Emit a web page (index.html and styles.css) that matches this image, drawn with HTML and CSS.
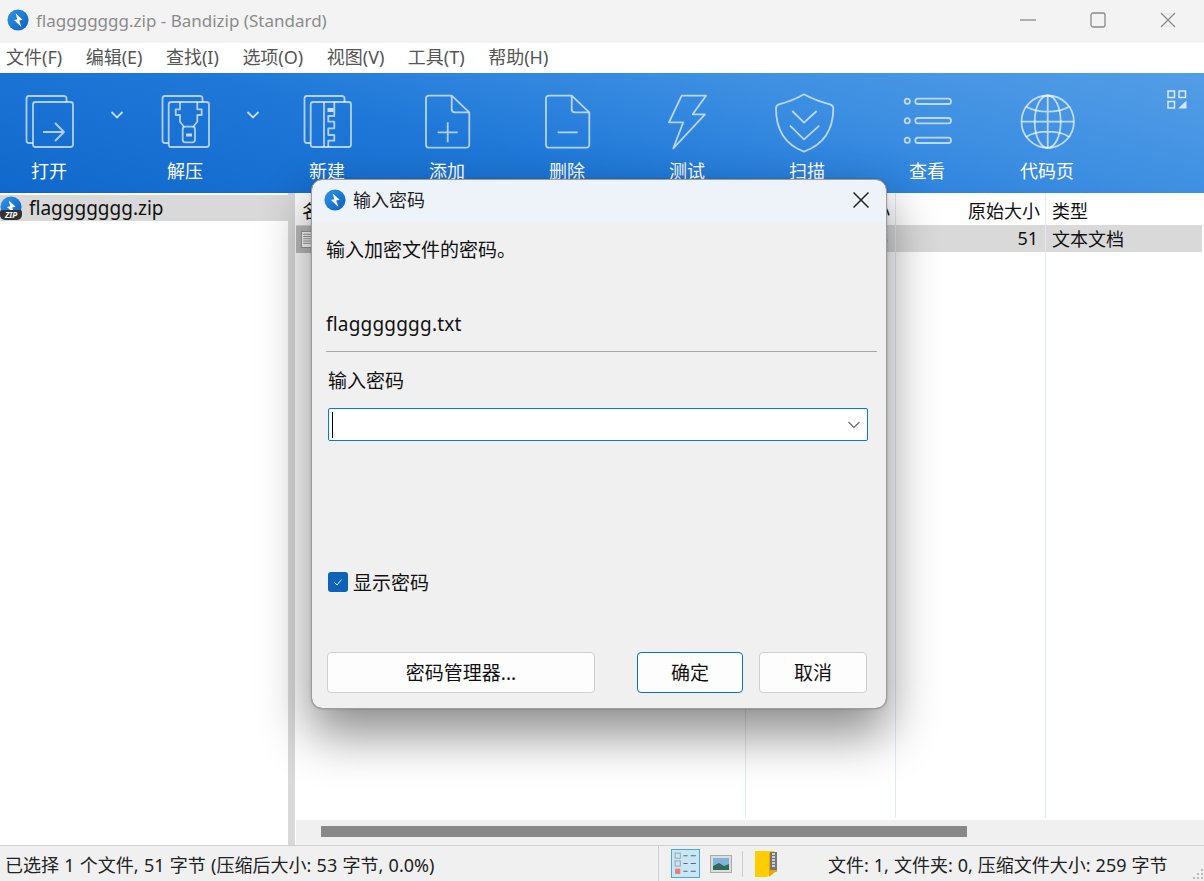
FILE: index.html
```html
<!DOCTYPE html>
<html lang="zh-CN">
<head>
<meta charset="utf-8">
<title>flaggggggg.zip - Bandizip (Standard)</title>
<link rel="stylesheet" href="styles.css">
</head>
<body>
<svg class="defs" width="0" height="0">
  <defs>
    <linearGradient id="logoBlue" x1="0" y1="0" x2="1" y2="1">
      <stop offset="0" stop-color="#2f96e6"/><stop offset="1" stop-color="#0b5fc0"/>
    </linearGradient>
    <symbol id="logo" viewBox="0 0 24 24">
      <circle cx="12" cy="12" r="11.5" fill="url(#logoBlue)"/>
      <path d="M9.500 4.800 17 11.800l-3.700.7 2.400 7L7.600 12l3.600-.9z" fill="#fff"/>
    </symbol>
  </defs>
</svg>
<div class="window">
  <header class="titlebar">
    <svg class="title-logo"><use href="#logo"/></svg>
    <span class="title-text">flaggggggg.zip - Bandizip (Standard)</span>
    <div class="controls">
      <svg class="ctl" viewBox="0 0 16 16"><path d="M0 8h16"/></svg>
      <svg class="ctl" viewBox="0 0 16 16"><rect x="1" y="1" width="14" height="14" rx="2"/></svg>
      <svg class="ctl" viewBox="0 0 16 16"><path d="M1 1l14 14M15 1 1 15"/></svg>
    </div>
  </header>
  <nav class="menubar">
    <span>文件(F)</span><span>编辑(E)</span><span>查找(I)</span><span>选项(O)</span><span>视图(V)</span><span>工具(T)</span><span>帮助(H)</span>
  </nav>
  <div class="toolbar">
    <div class="tool tool-first">
      <svg class="ticon" viewBox="0 0 64 64"><path d="M16 53h-4a2.500 2.500 0 0 1-2.500-2.500V8.500A2.500 2.500 0 0 1 12 6h35a2.500 2.500 0 0 1 2.500 2.500V12"/><rect x="16" y="12" width="40" height="45" rx="2.500"/><path d="M26 42h20M38 33l9 9-9 9"/></svg>
      <span>打开</span>
    </div>
    <div class="chev"><svg viewBox="0 0 14 10"><path d="M1.500 2 7 7.500 12.500 2"/></svg></div>
    <div class="tool tool-first">
      <svg class="ticon" viewBox="0 0 64 64"><path d="M15.700 53H12a2.500 2.500 0 0 1-2.500-2.500V8.500A2.500 2.500 0 0 1 12 6h35a2.500 2.500 0 0 1 2.500 2.500V12"/><rect x="15.700" y="12" width="40.300" height="45" rx="2.500"/><path d="M27 12v7.300h-4.300V25H27v6.700l4 5M44.300 12v7.300h4.400V25h-4.400v6.700l-4 5"/><rect x="29.700" y="36.700" width="12.300" height="15.600" rx="2.500"/><rect class="solid" x="33" y="43.500" width="6" height="3"/></svg>
      <span>解压</span>
    </div>
    <div class="chev"><svg viewBox="0 0 14 10"><path d="M1.500 2 7 7.500 12.500 2"/></svg></div>
    <div class="tools-rest">
      <div class="tool">
        <svg class="ticon" viewBox="0 0 64 64"><path d="M15.700 53H12a2.500 2.500 0 0 1-2.500-2.500V8.500A2.500 2.500 0 0 1 12 6h35a2.500 2.500 0 0 1 2.500 2.500V12"/><rect x="15.700" y="12" width="40.300" height="45" rx="2.500"/><path d="M29 12v45M39.300 12v14h-6v5.700h6v6.600h-6V45h6v5.700h-6V57"/><rect class="solid" x="32.500" y="18" width="6" height="4"/></svg>
        <span>新建</span>
      </div>
      <div class="tool">
        <svg class="ticon" viewBox="0 0 64 64"><path d="M36.700 5.700H14a3 3 0 0 0-3 3v46a3 3 0 0 0 3 3h37.300a3 3 0 0 0 3-3V22.300zM36.700 5.700v13.600a3 3 0 0 0 3 3h14.600M22.700 42.300h20M32.700 32.300v20"/></svg>
        <span>添加</span>
      </div>
      <div class="tool">
        <svg class="ticon" viewBox="0 0 64 64"><path d="M36.700 5.700H14a3 3 0 0 0-3 3v46a3 3 0 0 0 3 3h37.300a3 3 0 0 0 3-3V22.300zM36.700 5.700v13.600a3 3 0 0 0 3 3h14.600M22.700 42.300h20"/></svg>
        <span>删除</span>
      </div>
      <div class="tool">
        <svg class="ticon" viewBox="0 0 64 64"><path d="M26.700 5.700H51L37.700 24.300H50L18.300 58.300l10-26H14z"/></svg>
        <span>测试</span>
      </div>
      <div class="tool">
        <svg class="ticon" viewBox="0 0 64 64"><path d="M29 4.300c6 3.500 18 8 26 10 2.500.7 3.300 2 3.300 4 0 20-9 36-29.300 43.400C9 54.300 1 38 1 18.300c0-2 .8-3.300 3-4C12 12.300 23 7.800 29 4.300z"/><path d="M17.300 21 29 32.700 41.700 21M15 35.700l14 13.600 15.300-13.600"/></svg>
        <span>扫描</span>
      </div>
      <div class="tool">
        <svg class="ticon" viewBox="0 0 64 64"><circle cx="12.300" cy="11.300" r="2.600"/><circle cx="12.300" cy="30.700" r="2.600"/><circle cx="12.300" cy="50.300" r="2.600"/><rect x="20.300" y="8.700" width="35.700" height="5.300" rx="2.600"/><rect x="20.300" y="28" width="35.700" height="5.300" rx="2.600"/><rect x="20.300" y="47.700" width="35.700" height="5.300" rx="2.600"/></svg>
        <span>查看</span>
      </div>
      <div class="tool">
        <svg class="ticon" viewBox="0 0 64 64"><circle cx="32.700" cy="31.700" r="26.200"/><ellipse cx="32.700" cy="31.700" rx="13" ry="26.200"/><path d="M32.700 5.500v52.400M6.500 31.700h52.400M11 16.500c6 3.600 13.500 5.200 21.700 5.200s15.700-1.600 21.700-5.200M11 46.900c6-3.600 13.500-5.200 21.700-5.200s15.700 1.600 21.700 5.200"/></svg>
        <span>代码页</span>
      </div>
    </div>
    <svg class="grid-icon" viewBox="0 0 20 19"><rect x="1" y="1" width="6.500" height="6.500"/><rect x="12" y="1" width="6.500" height="6.500"/><rect x="1" y="11.500" width="6.500" height="6.500"/><path class="solid" d="M19.500 10.500V18.500H11z"/></svg>
  </div>
  <main class="panes">
    <aside class="tree">
      <div class="tree-row">
        <span class="zipicon">
          <svg class="zip-logo"><use href="#logo"/></svg>
          <b class="zip-tag">ZIP</b>
        </span>
        <span>flaggggggg.zip</span>
      </div>
    </aside>
    <div class="splitter"></div>
    <section class="list">
      <div class="rows">
        <div class="grid-row head">
          <span class="c-name">名称</span><span class="num">压缩后大小</span><span class="num">原始大小</span><span class="c-type">类型</span>
        </div>
        <div class="grid-row sel">
          <span class="c-name file"><span class="icon-cell"><svg class="fileicon" viewBox="0 0 16 22"><rect x=".5" y=".5" width="15" height="21" fill="#fff" stroke="#888"/><path d="M3 4h10M3 7h10M3 10h10M3 13h10M3 16h10" stroke="#777"/></svg></span></span><span class="num num2">53</span><span class="num num2">51</span><span class="c-type">文本文档</span>
        </div>
        <div class="col-lines"><i></i><i></i><i></i></div>
      </div>
      <div class="hscroll"><div class="thumb"></div></div>
    </section>
  </main>
  <footer class="statusbar">
    <span class="st-left">已选择 1 个文件, 51 字节 (压缩后大小: 53 字节, 0.0%)</span>
    <div class="st-icons">
      <span class="view-on">
        <svg viewBox="0 0 26 26"><g fill="none" stroke="#9aa"><rect x="3" y="3" width="5" height="5"/><rect x="3" y="10.500" width="5" height="5"/></g><rect x="3" y="18" width="5" height="5" fill="#e77"/><path d="M11 5.500h4M18 5.500h5M11 13h4M18 13h5M11 20.500h4M18 20.500h5" stroke="#666"/></svg>
      </span>
      <svg class="pic" viewBox="0 0 22 18"><rect x=".5" y=".5" width="21" height="17" fill="#ddd" stroke="#aaa"/><rect x="3" y="3" width="16" height="12" fill="#7fb5d8"/><path d="M3 11l6-3 5 3 5-2v6H3z" fill="#2f6a5a"/></svg>
      <i class="st-sep"></i>
      <svg class="folder" viewBox="0 0 26 28"><path d="M1 1h19v20l-7 6H1z" fill="#fc0"/><path d="M15 3h8v19l-2 0-6 5z" fill="#e8a800"/><rect x="16" y="2" width="7" height="18" fill="#777"/><path d="M18 4h3M18 7h3M18 10h3M18 13h3M18 16h3" stroke="#eee" stroke-width="1.500"/></svg>
    </div>
    <span class="st-right">文件: 1, 文件夹: 0, 压缩文件大小: 259 字节</span>
    <svg class="grip" viewBox="0 0 14 14"><path d="M11 2h2v2h-2zM7 6h2v2H7zM11 6h2v2h-2zM3 10h2v2H3zM7 10h2v2H7zM11 10h2v2h-2z" fill="#bbb"/></svg>
  </footer>
</div>

<div class="dialog">
  <div class="dlg-title">
    <svg class="dlg-logo"><use href="#logo"/></svg>
    <span class="dlg-caption">输入密码</span>
    <svg class="dlg-close" viewBox="0 0 16 16"><path d="M.5.500l15 15M15.500.500l-15 15"/></svg>
  </div>
  <div class="dlg-body">
    <p class="dlg-msg">输入加密文件的密码。</p>
    <p class="dlg-file">flaggggggg.txt</p>
    <hr class="dlg-rule">
    <label class="dlg-label">输入密码</label>
    <div class="combo">
      <i class="caret"></i>
      <svg class="combo-chev" viewBox="0 0 12 8"><path d="M.5 1 6 6.500 11.500 1"/></svg>
    </div>
    <div class="check">
      <span class="box"><svg viewBox="0 0 12 12"><path d="M2.500 6.500 5 9l4.500-5.500"/></svg></span>
      <span>显示密码</span>
    </div>
    <div class="btns">
      <button class="btn btn-pm">密码管理器...</button>
      <button class="btn btn-ok">确定</button>
      <button class="btn btn-cancel">取消</button>
    </div>
  </div>
</div>
</body>
</html>
```
FILE: styles.css
```css
* { box-sizing: border-box; }
html, body { margin: 0; padding: 0; }
body {
  width: 1204px;
  height: 881px;
  overflow: hidden;
  position: relative;
  background: #fff;
  font-family: "Noto Sans", "Noto Sans CJK SC", sans-serif;
  font-size: 18px;
  color: #111;
}
.defs { position: absolute; }
.window { display: flex; flex-direction: column; height: 881px; }

.titlebar {
  height: 43px;
  background: #f3f3f3;
  display: flex;
  align-items: center;
  padding-left: 7px;
  flex: none;
}
.title-logo { width: 22px; height: 22px; margin-right: 7px; margin-top: -3px; }
.title-text { color: #8b8b8b; font-size: 17px; margin-top: -3px; }
.controls { margin-left: auto; display: flex; gap: 54px; padding-right: 28px; margin-top: -3px; }
.ctl { width: 16px; height: 16px; fill: none; stroke: #8a8a8a; stroke-width: 1.300; }

.menubar {
  height: 30px;
  background: #fff;
  flex: none;
  display: flex;
  align-items: center;
  gap: 23.5px;
  padding: 0 0 4px 6px;
  color: #555;
  font-size: 18px;
}

.toolbar {
  height: 120px;
  flex: none;
  position: relative;
  display: flex;
  background-image: linear-gradient(14deg, #1168cc 0%, #1f78d8 40%, #3d8fe2 70%, #549de6 100%);
  color: #fff;
}
.tool {
  width: 110px;
  flex: none;
  display: flex;
  flex-direction: column;
  align-items: center;
  padding-top: 17px;
  font-size: 18px;
  line-height: 24px;
}
.tool-first { width: 98px; }
.ticon {
  width: 64px;
  height: 64px;
  margin-bottom: 5px;
  fill: none;
  stroke: rgba(255,255,255,.66);
  stroke-width: 1.800;
  stroke-linejoin: round;
}
.solid { fill: rgba(255,255,255,.75); stroke: none; }
.chev { width: 38px; flex: none; display: flex; justify-content: center; padding-top: 37px; }
.chev svg { width: 14px; height: 10px; fill: none; stroke: rgba(255,255,255,.75); stroke-width: 1.800; }
.tools-rest { display: flex; gap: 10px; }
.grid-icon {
  position: absolute;
  right: 17px;
  top: 17px;
  width: 20px;
  height: 19px;
  fill: none;
  stroke: rgba(255,255,255,.8);
  stroke-width: 1.500;
}

.panes { flex: 1; display: flex; min-height: 0; }
.tree { width: 288px; flex: none; padding-top: 2px; background: #fff; }
.tree-row {
  height: 26px;
  background: #d9d9d9;
  display: flex;
  align-items: center;
  font-size: 19px;
  color: #111;
}
.zipicon { position: relative; width: 29px; height: 24px; flex: none; }
.zip-logo { position: absolute; left: 0; top: 0; width: 22px; height: 22px; }
.zip-tag {
  position: absolute;
  left: 0;
  top: 14px;
  width: 22px;
  height: 10px;
  background: #333;
  border-radius: 2px 2px 5px 5px;
  color: #fff;
  font-size: 8px;
  line-height: 10px;
  text-align: center;
  font-style: italic;
}
.splitter { width: 7px; flex: none; background: #d9d9d9; }
.list { flex: 1; display: flex; flex-direction: column; min-width: 0; border-left: 1px solid #fff; }
.rows { flex: 1; position: relative; min-height: 0; margin-bottom: 2px; }
.grid-row {
  display: grid;
  grid-template-columns: 449px 150px 150px 1fr;
  align-items: center;
}
.grid-row > span { padding: 0 5px 0 6px; white-space: nowrap; }
.head { height: 32px; padding-top: 1px; }
.sel { height: 27px; background: #d9d9d9; margin-right: 2px; padding-bottom: 2px; }
.num { text-align: right; }
.grid-row > .num2 { padding-right: 7px; }
.grid-row > .c-type { padding-left: 7px; }
.grid-row > .file { display: flex; align-items: center; height: 27px; padding-left: 0; margin-bottom: -2px; }
.icon-cell { width: 17px; height: 27px; background: #bdbdbd; display: flex; align-items: center; justify-content: flex-end; }
.fileicon { width: 12px; height: 19px; flex: none; }
.col-lines {
  position: absolute;
  inset: 0 0 0 449px;
  display: grid;
  grid-template-columns: 150px 150px 1fr;
  pointer-events: none;
}
.col-lines i { border-left: 1px solid #e2eaf2; }
.hscroll { height: 25px; flex: none; background: #f0f0f0; padding: 6px 0 0 25px; }
.thumb { width: 646px; height: 11px; background: #888; }

.statusbar {
  height: 36px;
  flex: none;
  background: #f0f0f0;
  border-top: 1px solid #cfcfcf;
  display: flex;
  align-items: center;
  position: relative;
  padding-left: 5px;
  font-size: 18px;
  color: #222;
}
.st-left { width: 653px; flex: none; white-space: nowrap; word-spacing: .6px; }
.st-icons {
  display: flex;
  align-items: center;
  height: 100%;
  border-left: 1px solid #ccc;
  padding-left: 12px;
  gap: 10px;
  flex: none;
  width: 170px;
}
.view-on {
  width: 29px;
  height: 29px;
  background: #c9e6f7;
  border: 1px solid #4aa8e0;
  display: block;
  flex: none;
}
.view-on svg { width: 27px; height: 27px; display: block; }
.pic { width: 22px; height: 18px; flex: none; }
.st-sep { width: 1px; height: 26px; background: #ccc; flex: none; }
.folder { width: 26px; height: 28px; flex: none; margin-left: 1px; }
.st-right { white-space: nowrap; word-spacing: .3px; }
.grip { position: absolute; right: 0; bottom: 0; width: 14px; height: 14px; }

.dialog {
  position: absolute;
  left: 312px;
  top: 180px;
  width: 574px;
  height: 528px;
  background: #f0f0f0;
  border-radius: 10px;
  outline: 1px solid #9c9c9c;
  box-shadow: 0 0 3px rgba(0,0,0,.5), 0 24px 50px 2px rgba(0,0,0,.46);
  overflow: hidden;
  display: flex;
  flex-direction: column;
}
.dlg-title {
  height: 42px;
  flex: none;
  background: #eef3f9;
  display: flex;
  align-items: center;
  padding: 0 17px 2px 12px;
}
.dlg-logo { width: 22px; height: 22px; margin-right: 7px; }
.dlg-caption { font-size: 18px; color: #222; margin-top: -2px; }
.dlg-close { width: 16px; height: 16px; margin-left: auto; fill: none; stroke: #222; stroke-width: 1.500; }
.dlg-body { flex: 1; display: flex; flex-direction: column; padding: 0 9px 15px 14px; font-size: 19px; color: #111; }
.dlg-msg { margin: 15px 0 0; line-height: 26px; height: 26px; }
.dlg-file { margin: 48px 0 0; line-height: 26px; height: 26px; font-size: 19px; letter-spacing: .2px; }
.dlg-rule { margin: 14px 0 0; width: 100%; border: 0; height: 1px; background: #a8a8a8; flex: none; }
.dlg-label { margin: 16px 0 0 2px; line-height: 26px; height: 26px; display: block; }
.combo {
  margin: 14px 9px 0 2px;
  height: 33px;
  flex: none;
  background: #fff;
  border: 1px solid #0a78d7;
  border-radius: 2px;
  display: flex;
  align-items: center;
  padding: 0 7px 0 3px;
}
.caret { width: 1px; height: 26px; background: #000; }
.combo-chev { width: 12px; height: 8px; margin-left: auto; fill: none; stroke: #666; stroke-width: 1.100; }
.check { margin: 128px 0 0 2px; display: flex; align-items: center; gap: 5px; height: 26px; }
.box { width: 20px; height: 20px; background: #0f62b8; border-radius: 3px; display: flex; align-items: center; justify-content: center; }
.box svg { width: 12px; height: 12px; fill: none; stroke: #dfefff; stroke-width: 1; }
.btns { margin-top: auto; display: flex; padding-left: 1px; padding-right: 9px; }
.btn {
  height: 41px;
  background: #fdfdfd;
  border: 1px solid #cfcfcf;
  border-radius: 4px;
  font: inherit;
  color: #111;
  padding: 0 0 2px;
}
.btn-pm { width: 268px; }
.btn-ok { width: 106px; margin-left: 42px; border-color: #0a6fc8; }
.btn-cancel { width: 108px; margin-left: 16px; }
```
